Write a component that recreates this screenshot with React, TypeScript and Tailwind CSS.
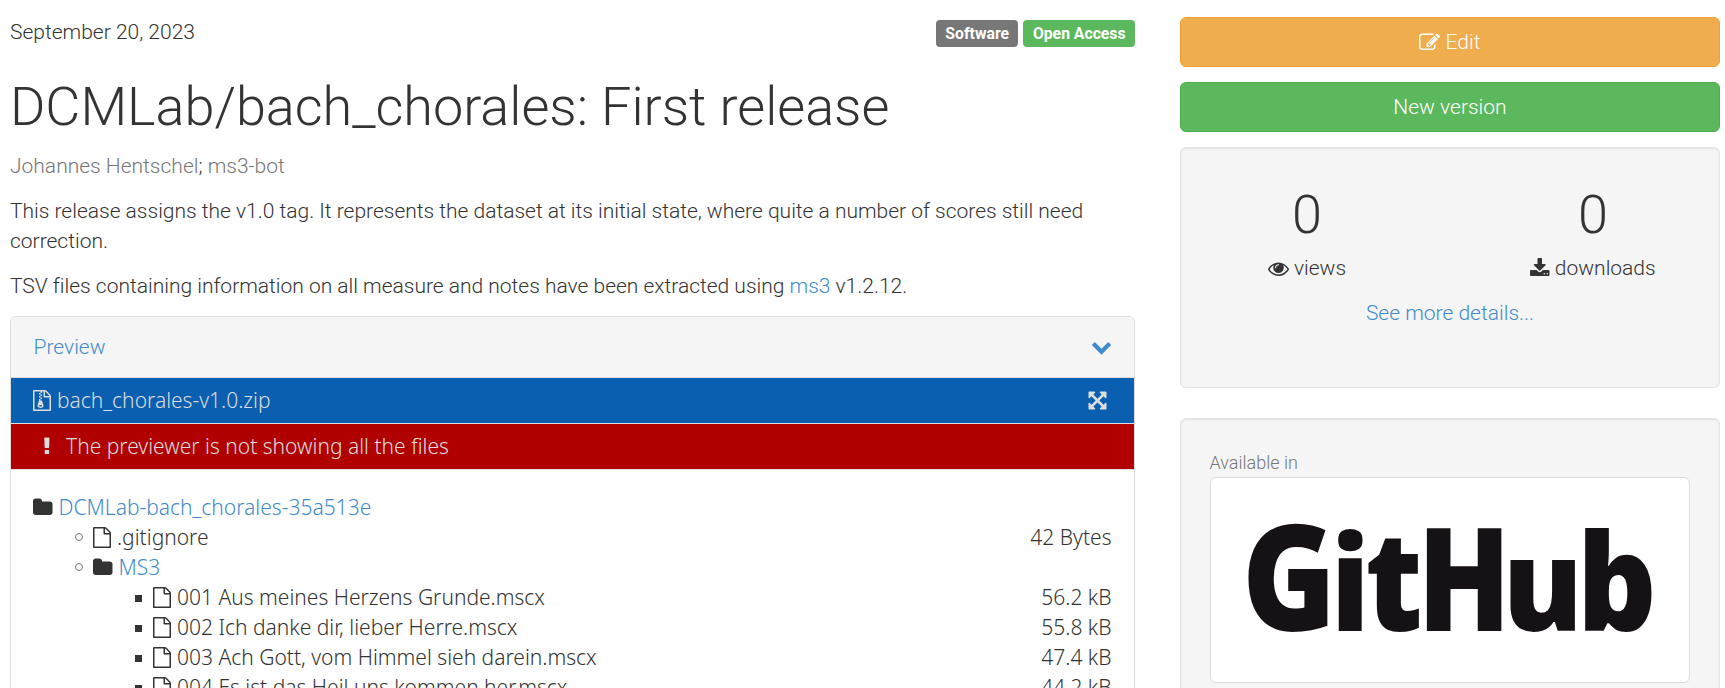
import React from 'react';

type IconProps = { d: string; box?: string; className?: string };

const Glyph = ({ d, box = '0 0 1792 1792', className = '' }: IconProps) => (
  <svg viewBox={box} fill="currentColor" className={`block shrink-0 ${className}`} aria-hidden="true">
    <path d={d} />
  </svg>
);

const ICONS = {
  edit: 'M888 1184l116-116-152-152-116 116v56h96v96h56zm440-720q-16-16-33 1l-350 350q-17 17-1 33t33-1l350-350q17-17 1-33zm80 594v190q0 119-84.5 203.5t-203.5 84.5h-832q-119 0-203.5-84.5t-84.5-203.5v-832q0-119 84.5-203.5t203.5-84.5h832q63 0 117 25 15 7 18 23 3 17-9 29l-49 49q-14 14-32 8-23-6-45-6h-832q-66 0-113 47t-47 113v832q0 66 47 113t113 47h832q66 0 113-47t47-113v-126q0-13 9-22l64-64q15-15 35-7t20 29zm-96-738l288 288-672 672h-288v-288zm444 132l-92 92-288-288 92-92q28-28 68-28t68 28l152 152q28 28 28 68t-28 68z',
  eye: 'M1664 960q-152-236-381-353 61 104 61 225 0 185-131.5 316.5t-316.5 131.5-316.5-131.5-131.5-316.5q0-121 61-225-229 117-381 353 133 205 333.5 326.5t434.5 121.5 434.5-121.5 333.5-326.5zm-720-384q0-20-14-34t-34-14q-125 0-214.5 89.5t-89.5 214.5q0 20 14 34t34 14 34-14 14-34q0-86 61-147t147-61q20 0 34-14t14-34zm848 384q0 34-20 69-140 230-376.5 368.5t-499.5 138.5-499.5-139-376.5-368q-20-35-20-69t20-69q140-229 376.5-368t499.5-139 499.5 139 376.5 368q20 35 20 69z',
  download: 'M1344 1344q0-26-19-45t-45-19-45 19-19 45 19 45 45 19 45-19 19-45zm256 0q0-26-19-45t-45-19-45 19-19 45 19 45 45 19 45-19 19-45zm128-224v320q0 40-28 68t-68 28h-1472q-40 0-68-28t-28-68v-320q0-40 28-68t68-28h465l135 136q58 56 136 56t136-56l136-136h464q40 0 68 28t28 68zm-325-569q17 41-14 70l-448 448q-18 19-45 19t-45-19l-448-448q-31-29-14-70 17-39 59-39h256v-448q0-26 19-45t45-19h256q26 0 45 19t19 45v448h256q42 0 59 39z',
  folder: 'M1728 608v704q0 92-66 158t-158 66h-1216q-92 0-158-66t-66-158v-960q0-92 66-158t158-66h320q92 0 158 66t66 158v32h672q92 0 158 66t66 158z',
  file: 'M1596 380q28 28 48 76t20 88v1152q0 40-28 68t-68 28h-1344q-40 0-68-28t-28-68v-1600q0-40 28-68t68-28h896q40 0 88 20t76 48zm-444-244v376h376q-10-29-22-41l-313-313q-12-12-41-22zm384 1528v-1024h-416q-40 0-68-28t-28-68v-416h-768v1536h1280z',
  zip: 'M768 384v-128h-128v128h128zm128 128v-128h-128v128h128zm-128 128v-128h-128v128h128zm128 128v-128h-128v128h128zm700-388q28 28 48 76t20 88v1152q0 40-28 68t-68 28h-1344q-40 0-68-28t-28-68v-1600q0-40 28-68t68-28h896q40 0 88 20t76 48zm-444-244v376h376q-10-29-22-41l-313-313q-12-12-41-22zm384 1528v-1024h-416q-40 0-68-28t-28-68v-416h-128v128h-128v-128h-512v1536h1280zm-627-721l107 349q8 27 8 52 0 83-72.5 137.5t-183.5 54.5-183.5-54.5-72.5-137.5q0-25 8-52 21-63 120-396v-128h128v128h79q22 0 39 13t23 34zm-141 465q53 0 90.5-19t37.5-45-37.5-45-90.5-19-90.5 19-37.5 45 37.5 45 90.5 19z',
  exclamation: 'M1120 1248v224q0 26-19 45t-45 19h-256q-26 0-45-19t-19-45v-224q0-26 19-45t45-19h256q26 0 45 19t19 45zm30-1056l-28 768q-1 26-20.500 45t-45.500 19h-256q-26 0-45.500-19t-20.500-45l-28-768q-1-26 17.500-45t44.500-19h320q26 0 44.500 19t17.500 45z',
  chevron: 'M1683 808l-742 741q-19 19-45 19t-45-19l-742-741q-19-19-19-45.500t19-45.500l166-165q19-19 45-19t45 19l531 531 531-531q19-19 45-19t45 19l166 165q19 19 19 45.500t-19 45.500z',
  expand: 'M1411 541l-355 355 355 355 144-144q29-31 70-14 39 17 39 59v448q0 26-19 45t-45 19h-448q-42 0-59-40-17-39 14-69l144-144-355-355-355 355 144 144q31 30 14 69-17 40-59 40h-448q-26 0-45-19t-19-45v-448q0-42 40-59 39-17 69 14l144 144 355-355-355-355-144 144q-19 19-45 19-12 0-24-5-40-17-40-59v-448q0-26 19-45t45-19h448q42 0 59 40 17 39-14 69l-144 144 355 355 355-355-144-144q-31-30-14-69 17-40 59-40h448q26 0 45 19t19 45v448q0 42-39 59-13 5-25 5-26 0-45-19z',
};

const FILES = [
  { name: '001 Aus meines Herzens Grunde.mscx', size: '56.2 kB' },
  { name: '002 Ich danke dir, lieber Herre.mscx', size: '55.8 kB' },
  { name: '003 Ach Gott, vom Himmel sieh darein.mscx', size: '47.4 kB' },
  { name: '004 Es ist das Heil uns kommen her.mscx', size: '44.2 kB' },
];

// Wordmark letters at 100px, each placed on the baseline and stretched by sx, sy.
const WORDMARK = [
  { ch: 'G', x: 32.1, sx: 1.27, sy: 1.47 },
  { ch: 'i', x: 120.8, sx: 1.2, sy: 1.31 },
  { ch: 't', x: 155.2, sx: 1.25, sy: 1.38 },
  { ch: 'H', x: 207.4, sx: 1.217, sy: 1.437 },
  { ch: 'u', x: 292.7, sx: 1.195, sy: 1.27 },
  { ch: 'b', x: 366.9, sx: 1.24, sy: 1.35 },
];

const FileIcon = () => <Glyph d={ICONS.file} box="128 0 1536 1792" className="h-[21px] w-[18px]" />;
const FolderIcon = () => <Glyph d={ICONS.folder} box="64 0 1664 1792" className="h-[21px] w-[19.5px]" />;

const Circle = () => (
  <span className="flex w-[60px] shrink-0 justify-end pr-[10px]">
    <span className="size-[8px] rounded-full border border-[#777]" />
  </span>
);

const Square = () => (
  <span className="flex w-[120px] shrink-0 justify-end pr-[11px]">
    <span className="mt-[3px] size-[7px] bg-[#333]" />
  </span>
);

function Preview() {
  return (
    <section className="mt-[15px] h-[600px] overflow-hidden rounded-t-[6px] border border-[#ddd]">
      <header className="flex h-[61px] items-center justify-between border-b border-[#ddd] bg-[#f5f5f5] pr-[22px] pl-[22.5px] text-[#428bca]">
        <a>Preview</a>
        <Glyph d={ICONS.chevron} className="mb-[2px] size-[21px]" />
      </header>
      <div className="font-['Noto_Sans',sans-serif]">
        <div className="flex h-[46px] items-center border-b border-[#ddd] bg-[#0a5fb0] pr-[26px] pb-px pl-[22px] text-[#ddd]">
          <Glyph d={ICONS.zip} box="128 0 1536 1792" className="h-[21px] w-[18px]" />
          <span className="ml-[6px] flex-1">bach_chorales-v1.0.zip</span>
          <Glyph d={ICONS.expand} className="size-[21px]" />
        </div>
        <div className="flex h-[46px] items-center border-b border-[#ddd] bg-[#b10000] pb-px pl-[25px] text-[#ddd]">
          <Glyph d={ICONS.exclamation} className="size-[21px]" />
          <span className="ml-[9px]">The previewer is not showing all the files</span>
        </div>
        <ul className="pt-[22px] pr-[22.5px] pl-[22px]">
          <li className="flex h-[30px] items-center">
            <FolderIcon />
            <a className="ml-[6px] text-[#428bca]">DCMLab-bach_chorales-35a513e</a>
          </li>
          <li className="flex h-[30px] items-center">
            <Circle />
            <FileIcon />
            <span className="ml-[6px] flex-1">.gitignore</span>
            <span>42 Bytes</span>
          </li>
          <li className="flex h-[30px] items-center">
            <Circle />
            <FolderIcon />
            <a className="ml-[6px] text-[#428bca]">MS3</a>
          </li>
          {FILES.map((f) => (
            <li key={f.name} className="flex h-[30px] items-center">
              <Square />
              <FileIcon />
              <span className="ml-[6px] flex-1">{f.name}</span>
              <span>{f.size}</span>
            </li>
          ))}
        </ul>
      </div>
    </section>
  );
}

const WELL = 'shrink-0 rounded-[6px] border border-[#e3e3e3] bg-[#f5f5f5] px-[29px] shadow-[inset_0_1px_2px_rgba(0,0,0,0.08)]';

function Sidebar() {
  return (
    <aside className="flex w-[540px] shrink-0 flex-col pt-[17px]">
      <button className="flex h-[50px] shrink-0 items-center justify-center rounded-[6px] border border-[#eea236] bg-[#f0ad4e] text-white">
        <Glyph d={ICONS.edit} className="mr-[6px] -ml-px size-[21px]" />
        Edit
      </button>
      <button className="mt-[15px] h-[50px] shrink-0 rounded-[6px] border border-[#4cae4c] bg-[#5cb85c] text-white">New version</button>
      <div className={`mt-[15px] h-[241px] pt-[37px] ${WELL}`}>
        <div className="-mx-px flex justify-between text-center">
          <div className="w-[196px]">
            <div className="text-[54px] leading-[60px]">0</div>
            <div className="mt-[8px] flex items-center justify-center gap-[5px]">
              <Glyph d={ICONS.eye} className="size-[21px]" />
              views
            </div>
          </div>
          <div className="w-[196px]">
            <div className="text-[54px] leading-[60px]">0</div>
            <div className="mt-[8px] flex items-center justify-center gap-[5px]">
              <Glyph d={ICONS.download} box="64 0 1664 1792" className="h-[21px] w-[19.5px]" />
              downloads
            </div>
          </div>
        </div>
        <div className="mt-[15px] text-center text-[#428bca]">See more details...</div>
      </div>
      <div className={`mt-[30px] h-[400px] pt-[29px] ${WELL}`}>
        <div className="-ml-[0.5px] h-[29px] text-[18px] text-[#777]">Available in</div>
        <div className="flex h-[206px] items-center justify-center rounded-[6px] border border-[#ddd] bg-white">
          <svg viewBox="0 0 480 206" className="h-[206px] w-[480px] shrink-0" role="img">
            {WORDMARK.map(({ ch, x, sx, sy }) => (
              <text
                key={ch}
                transform={`translate(${x} 154.300) scale(${sx} ${sy})`}
                fontSize="100"
                fill="#161114"
                className="font-['Open_Sans',sans-serif] font-extrabold"
              >
                {ch}
              </text>
            ))}
          </svg>
        </div>
      </div>
    </aside>
  );
}

export default function App() {
  return (
    <div className="flex h-[688px] w-[1725px] gap-[45px] overflow-hidden bg-white pl-[10px] font-['Roboto',sans-serif] text-[21px] leading-[30px] font-light text-[#333]">
      <main className="w-[1125px] shrink-0 pt-[17px]">
        <div className="flex justify-between">
          <time>September 20, 2023</time>
          <div className="mt-[3px] flex h-[27px] gap-[5px] text-[15.75px] leading-[27px] font-bold text-white">
            <span className="rounded-[4px] bg-[#777] px-[9.45px]">Software</span>
            <span className="rounded-[4px] bg-[#5cb85c] px-[9.45px]">Open Access</span>
          </div>
        </div>
        <h1 className="mt-[30px] mb-[15px] text-[54px] leading-[59px] tracking-[-0.02px]">DCMLab/bach_chorales: First release</h1>
        <p>
          <span className="text-[#777]">Johannes Hentschel</span>; <span className="text-[#777]">ms3-bot</span>
        </p>
        <p className="mt-[15px] tracking-[-0.01px]">
          This release assigns the v1.0 tag. It represents the dataset at its initial state, where quite a number of scores still need correction.
        </p>
        <p className="mt-[15px] tracking-[-0.01px]">
          TSV files containing information on all measure and notes have been extracted using <a className="text-[#428bca]">ms3</a> v1.2.12.
        </p>
        <Preview />
      </main>
      <Sidebar />
    </div>
  );
}
